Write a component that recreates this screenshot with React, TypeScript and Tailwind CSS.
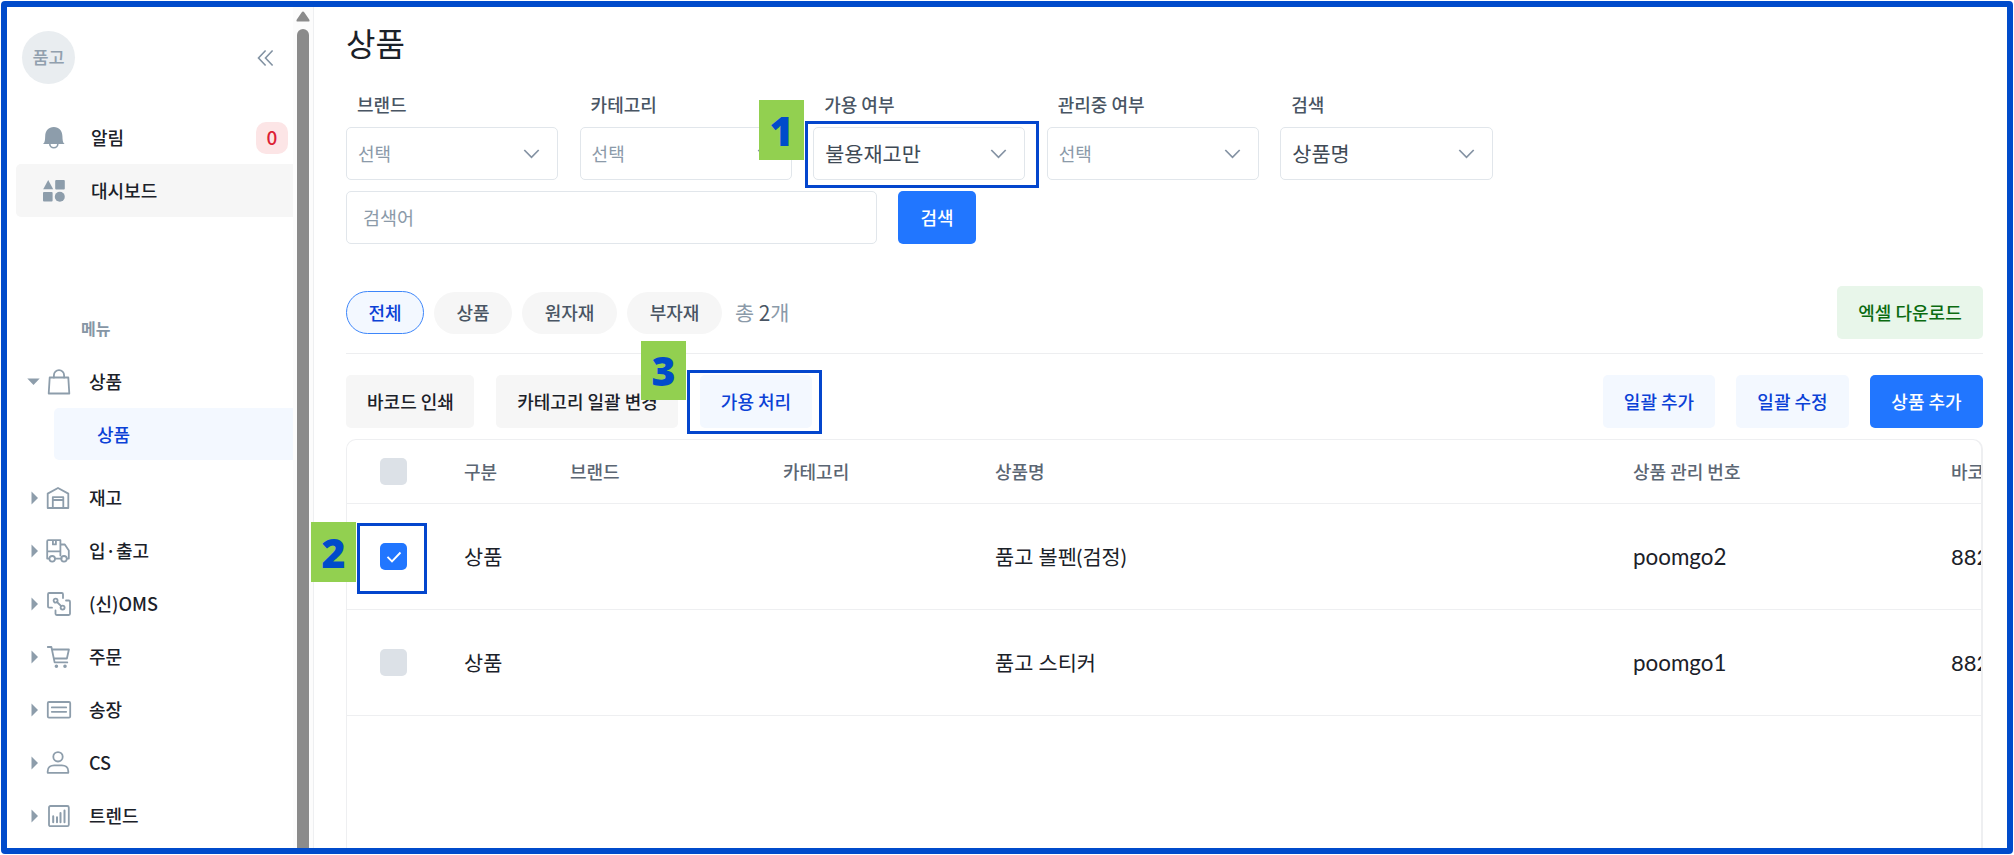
import type { ReactNode } from "react";

type MenuItem = { name: string; icon: ReactNode };
type Column = { name: string; width: string };
type Product = { checked: boolean; kind: string; name: string; code: string; barcode: string };

const ICON = { width: 26, height: 26, viewBox: "0 0 26 26", fill: "none", stroke: "#8d9dab", strokeWidth: 1.8, strokeLinecap: "round", strokeLinejoin: "round" } as const;

const bagIcon = (
  <svg {...ICON}>
    <path d="M3.700 8.500h18.600l1 16H2.700z" />
    <path d="M7.900 8.500V6.200a5.100 5 0 0 1 10.200 0v2.300" />
  </svg>
);

const MENU: MenuItem[] = [
  { name: "재고", icon: <svg {...ICON}><path d="M1.700 8.600 12 3l10.300 5.600V23H1.700z" /><path d="M6.800 23V12.200h10.500V23M6.800 15h10.500" /></svg> },
  { name: "입·출고", icon: <svg {...ICON}><path d="M3 20.600H1.200V3.200q0-1 1-1h12.200v11.200H1.200M6.900 2.400v4h3v-4M14.400 6.500h4.400l4 6v8.100h-1.800M14.400 13.400v4.200M9.200 20.600h6.400" /><circle cx="6.200" cy="20.800" r="2.800" /><circle cx="18" cy="20.800" r="2.800" /></svg> },
  { name: "(신)OMS", icon: <svg {...ICON}><path d="M17 7V3.200Q17 2 15.800 2H3.200Q2 2 2 3.200V15.500Q2 16.700 3.200 16.700H6M9.500 19.500V22.800Q9.500 24 10.700 24H22.800Q24 24 24 22.800V10.700Q24 9.500 22.800 9.500H20" /><circle cx="9.600" cy="9.600" r="2" /><circle cx="16.600" cy="16.600" r="2" /><path d="m11 11 4.200 4.200" /></svg> },
  { name: "주문", icon: <svg {...ICON}><path d="M1.800 3h3.600l3.200 15.400h12.700M5.900 5.500h17l-2 9H7.800" /><circle cx="10.400" cy="22.300" r=".9" fill="#8d9dab" /><circle cx="19" cy="22.300" r=".9" fill="#8d9dab" /></svg> },
  { name: "송장", icon: <svg {...ICON}><rect x="1.800" y="5" width="22.400" height="15.600" rx="1.200" /><path d="M5.800 10.400h14.400M5.800 14.800h14.400" /></svg> },
  { name: "CS", icon: <svg {...ICON}><circle cx="12" cy="6.800" r="4.700" /><path d="M1.700 22.800v-1.500c0-4 3-6 6.500-6h7.600c3.500 0 6.500 2 6.500 6v1.500z" /></svg> },
  { name: "트렌드", icon: <svg {...ICON}><rect x="3" y="3" width="19.800" height="20.200" rx="1.500" /><path d="M7.200 19.200v-6M11 19.200v-5M14.500 19.200V10M18.500 19.200V7.500" strokeWidth="2" /></svg> },
];

const FILTERS = [
  { label: "브랜드", value: "" },
  { label: "카테고리", value: "" },
  { label: "가용 여부", value: "불용재고만" },
  { label: "관리중 여부", value: "" },
  { label: "검색", value: "상품명" },
];

const COLUMNS: Column[] = [
  { name: "구분", width: "w-[106px]" },
  { name: "브랜드", width: "w-[213px]" },
  { name: "카테고리", width: "w-[212px]" },
  { name: "상품명", width: "w-[638px]" },
  { name: "상품 관리 번호", width: "w-[318px]" },
  { name: "바코드", width: "w-[200px]" },
];

const PRODUCTS: Product[] = [
  { checked: true, kind: "상품", name: "품고 볼펜(검정)", code: "poomgo2", barcode: "8820" },
  { checked: false, kind: "상품", name: "품고 스티커", code: "poomgo1", barcode: "8820" },
];

function Caret() {
  return <svg width="8" height="14" viewBox="0 0 8 14" fill="#8d9dab" className="ml-[24px] mr-[7px]"><path d="M.500.500 7 7 .500 13.500z" /></svg>;
}

function Chevron() {
  return <svg width="17" height="10" viewBox="0 0 17 10" fill="none" stroke="#8492a3" strokeWidth="1.700" className="mr-[17px]"><path d="m1.300 1 7.200 7.400L15.700 1" /></svg>;
}

function Checkbox({ checked }: { checked?: boolean }) {
  return (
    <span className={`flex h-[27px] w-[27px] items-center justify-center rounded-[5px] ${checked ? "bg-[#2176ff]" : "bg-[#dce1e7]"}`}>
      {checked && <svg width="16" height="12" viewBox="0 0 16 12" fill="none" stroke="white" strokeWidth="1.900"><path d="m1.500 5.800 4.500 4.600L14.500 1.500" /></svg>}
    </span>
  );
}

function Button({ children, className }: { children: ReactNode; className: string }) {
  return <button className={`h-[53px] shrink-0 rounded-[5px] text-[18px] font-medium whitespace-nowrap ${className}`}>{children}</button>;
}

// numbered tag with the outline of the control it points at
function Marker({ n, tag, box }: { n: number; tag: string; box: string }) {
  return (
    <>
      <div className={`absolute flex w-[45px] items-center justify-center bg-[#92d050] font-['Noto_Sans',sans-serif] text-[41px] leading-none font-black text-[#004bcb] ${tag}`}>{n}</div>
      <div className={`absolute border-[3px] border-[#0446cd] ${box}`} />
    </>
  );
}

function Sidebar() {
  return (
    <aside className="flex w-[307px] shrink-0 border-r border-[#eeeff1]">
      <div className="w-[286px] shrink-0 text-[18px] font-medium text-[#1b2129]">
        <div className="mt-6 ml-[15px] flex h-[53px] items-center justify-between pr-[19px]">
          <div className="flex h-[53px] w-[53px] items-center justify-center rounded-full bg-[#e9edf0] text-[17.500px] text-[#91a0ae]">품고</div>
          <svg width="17" height="18" viewBox="0 0 17 18" fill="none" stroke="#8292a2" strokeWidth="1.600"><path d="M8.600 1.500 1.500 9l7.100 7.500M15.600 1.500 8.500 9l7.100 7.500" /></svg>
        </div>
        <div className="mt-[27px] flex h-[53px] items-center pr-[5px]">
          <svg width="22" height="22" viewBox="0 0 22 22" fill="#8d9dab" className="ml-9 mr-[26px]">
            <path d="M0 17c2-1.500 2-4 2.200-8C2.500 3.500 5.500 0 10.800 0s8.300 3.500 8.600 9c.2 4 .2 6.500 2.200 8z" />
            <path d="M6.800 17a4 3.800 0 0 0 8 0" fill="none" stroke="#8d9dab" strokeWidth="1.600" />
          </svg>
          <span className="pb-px">알림</span>
          <span className="ml-auto flex h-8 w-8 items-center justify-center rounded-[10px] bg-[#fce5e6] text-[19px] text-[#dc1f36]">0</span>
        </div>
        <div className="ml-[9px] flex h-[53px] items-center rounded-l-[5px] bg-[#f6f6f6]">
          <svg width="22" height="22" viewBox="0 0 22 22" fill="#8d9dab" className="ml-[27px] mr-[26px]">
            <path d="m5.200 0 5 9.300H.200z" />
            <rect x="12.200" width="9.600" height="9.400" rx="1" />
            <rect y="12" width="9.600" height="9.600" rx="1" />
            <circle cx="16.800" cy="16.800" r="5" />
          </svg>
          <span className="pb-px">대시보드</span>
        </div>
        <div className="mt-[98px] ml-[74px] h-[27px] text-[16px] leading-[27px] font-bold text-[#8696a5]">메뉴</div>
        <div className="mt-[13px] flex h-[53px] items-center">
          <svg width="13" height="8" viewBox="0 0 13 8" fill="#8d9dab" className="ml-5 mr-[6px]"><path d="M.300.500h12.400L6.500 7z" /></svg>
          {bagIcon}
          <span className="ml-[17px]">상품</span>
        </div>
        <div className="ml-[47px] flex h-[52px] items-center rounded-l-[5px] bg-[#f3f8ff] pl-[43px] text-[#0b41d6]">상품</div>
        <div className="mt-[11px]">
          {MENU.map((m) => (
            <div key={m.name} className="flex h-[53px] items-center">
              <Caret />
              {m.icon}
              <span className="ml-[17px]">{m.name}</span>
            </div>
          ))}
        </div>
      </div>
      <div className="flex flex-1 flex-col items-center bg-[#fcfcfc] pt-1">
        <svg width="14" height="11" viewBox="0 0 14 11" fill="#8b8b8b"><path d="M7 .500q.8 0 1.400.9l4.800 7.100q1 2-.9 2H1.700q-1.900 0-.9-2l4.800-7.100Q6.200.500 7 .500z" /></svg>
        <div className="mt-[7px] w-3 flex-1 rounded-t-full bg-[#8b8b8b]" />
      </div>
    </aside>
  );
}

export default function App() {
  return (
    <div className="relative h-[855px] w-[2014px] overflow-hidden bg-white p-px font-['Noto_Sans_CJK_KR',sans-serif]">
      <div className="flex h-[853px] w-[2012px] overflow-hidden rounded-[4px] border-6 border-[#004bcb]">
        <Sidebar />
        <main className="flex min-w-0 flex-1 flex-col pr-6 pl-8">
          <h1 className="mt-[12px] h-[46px] text-[32px] leading-[46px] text-[#1b2129]">상품</h1>
          <div className="mt-[25px] flex gap-[21.400px]">
            {FILTERS.map((f) => (
              <div key={f.label} className="w-[212.200px]">
                <div className="h-[29px] pl-[11px] text-[18px] leading-[29px] font-medium text-[#495563]">{f.label}</div>
                <div className="mt-[8px] flex h-[53px] items-center justify-between rounded-[5px] border border-[#e1e6eb] pl-[11px]">
                  {f.value ? <span className="text-[20.800px] text-[#3f4a56]">{f.value}</span> : <span className="text-[18px] text-[#8b9aa9]">선택</span>}
                  <Chevron />
                </div>
              </div>
            ))}
          </div>
          <div className="mt-[11px] flex">
            <div className="flex h-[53px] w-[531px] items-center rounded-[5px] border border-[#e1e6eb] pl-4 text-[18.500px] text-[#8b9aa9]">검색어</div>
            <Button className="ml-[21px] w-[78px] bg-[#2176ff] text-white">검색</Button>
          </div>
          <div className="mt-[42px] flex h-[53px] items-center gap-[10px] text-[18px] font-medium text-[#495563]">
            <span className="flex h-[43px] w-[78px] items-center justify-center rounded-full border border-[#3d86fa] bg-[#f3f8ff] text-[#0b41d6]">전체</span>
            <span className="flex h-[42px] w-[78px] items-center justify-center rounded-full bg-[#f6f6f6]">상품</span>
            <span className="flex h-[42px] w-[95px] items-center justify-center rounded-full bg-[#f6f6f6]">원자재</span>
            <span className="flex h-[42px] w-[95px] items-center justify-center rounded-full bg-[#f6f6f6]">부자재</span>
            <span className="ml-[3px] text-[20.800px] font-normal text-[#8b9aa9]">총 <span className="text-[#495563]">2</span>개</span>
            <Button className="ml-auto w-[146px] bg-[#e8f6ea] text-[#0b6b10]">엑셀 다운로드</Button>
          </div>
          <div className="mt-[14px] h-px bg-[#edeef0]" />
          <div className="mt-[21px] flex">
            <Button className="w-[128px] bg-[#f6f6f6] pl-px text-[#1b2129]">바코드 인쇄</Button>
            <Button className="ml-[22px] w-[182px] bg-[#f6f6f6] pl-px text-[#1b2129]">카테고리 일괄 변경</Button>
            <Button className="ml-[22px] w-[112px] bg-[#f3f8ff] text-[#0b41d6]">가용 처리</Button>
            <Button className="ml-auto w-[112px] bg-[#f3f8ff] text-[#0b41d6]">일괄 추가</Button>
            <Button className="ml-[21px] w-[113px] bg-[#f3f8ff] text-[#0b41d6]">일괄 수정</Button>
            <Button className="ml-[21px] w-[113px] bg-[#2176ff] text-white">상품 추가</Button>
          </div>
          <div className="mt-[11px] min-h-0 flex-1 overflow-hidden rounded-t-[10px] border border-r-2 border-b-0 border-[#eeeff1]">
            <div className="flex h-16 w-[1850px] items-center border-b border-[#eeeff1] pl-[33px] text-[18px] font-medium text-[#5b6673]">
              <div className="w-[84px] shrink-0"><Checkbox /></div>
              {COLUMNS.map((c) => <div key={c.name} className={`shrink-0 ${c.width}`}>{c.name}</div>)}
            </div>
            {PRODUCTS.map((p) => (
              <div key={p.code} className="flex h-[106px] w-[1850px] items-center border-b border-[#eeeff1] pl-[33px] font-['Lato','Noto_Sans_CJK_KR',sans-serif] text-[20.800px] text-[#1b2129]">
                <div className="w-[84px] shrink-0"><Checkbox checked={p.checked} /></div>
                <div className="w-[531px] shrink-0">{p.kind}</div>
                <div className="w-[638px] shrink-0">{p.name}</div>
                <div className="w-[318px] shrink-0 text-[22.400px]">{p.code}</div>
                <div className="shrink-0 text-[22px]">{p.barcode}</div>
              </div>
            ))}
          </div>
        </main>
      </div>
      <Marker n={1} tag="top-[100px] left-[759px] h-[60px]" box="top-[121px] left-[805px] h-[67px] w-[234px]" />
      <Marker n={2} tag="top-[522px] left-[311px] h-[60px]" box="top-[523px] left-[357px] h-[71px] w-[70px]" />
      <Marker n={3} tag="top-[341px] left-[641px] h-[59px]" box="top-[370px] left-[687px] h-[64px] w-[135px]" />
    </div>
  );
}
